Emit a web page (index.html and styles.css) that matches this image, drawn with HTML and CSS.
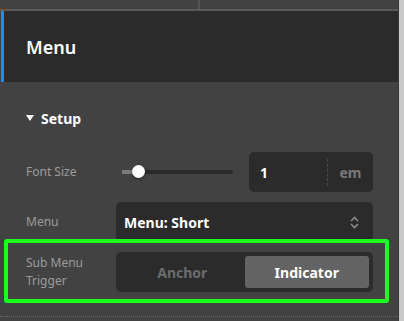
FILE: index.html
```html
<!DOCTYPE html>
<html lang="en">
<head>
    <meta charset="UTF-8">
    <meta name="viewport" content="width=device-width, initial-scale=1.0">
    <title>Menu Settings</title>
    <link rel="stylesheet" href="styles.css">
</head>
<body>
    <div class="layout">
        <div class="panel">
            <div class="topbar">
                <div class="tab"></div>
                <div class="tab"></div>
            </div>
            <div class="panel-header">Menu</div>
            <div class="section">
                <div class="section-title">
                    <span class="caret"></span>
                    Setup
                </div>

                <div class="field">
                    <label class="field-label">Font Size</label>
                    <div class="field-control">
                        <div class="slider">
                            <div class="slider-track">
                                <div class="slider-fill"></div>
                                <div class="slider-thumb"></div>
                            </div>
                        </div>
                        <div class="number-input">
                            <span class="number-value">1</span>
                            <span class="number-unit">em</span>
                        </div>
                    </div>
                </div>

                <div class="field">
                    <label class="field-label">Menu</label>
                    <div class="select">
                        <span>Menu: Short</span>
                        <svg class="select-arrows" width="9" height="13" viewBox="0 0 9 13">
                            <path d="M1 5 L4.5 1.5 L8 5 M1 8 L4.5 11.5 L8 8" fill="none" stroke="#8a8a8a" stroke-width="1.6"/>
                        </svg>
                    </div>
                </div>

                <div class="field highlighted">
                    <span class="highlight"></span>
                    <label class="field-label">Sub Menu Trigger</label>
                    <div class="segmented">
                        <button class="segment">Anchor</button>
                        <button class="segment active">Indicator</button>
                    </div>
                </div>
            </div>
        </div>
        <div class="scrollbar"></div>
    </div>
</body>
</html>
```

FILE: styles.css
```css
body {
    margin: 0;
    width: 404px;
    height: 321px;
    overflow: hidden;
    background-color: #424242;
    font-family: "Noto Sans", "Open Sans", sans-serif;
    color: #fff;
}
.layout {
    display: flex;
    height: 321px;
}
.panel {
    width: 398px;
    background-color: #424242;
}
.scrollbar {
    width: 5px;
    border-left: 1px solid #363636;
    background-color: #c9c9c9;
}
.topbar {
    display: flex;
    height: 9px;
    border-bottom: 2px solid #5a5a5a;
}
.tab {
    width: 198px;
    background-color: #424242;
}
.tab + .tab {
    flex: 1;
    border-left: 2px solid #555;
}
.panel-header {
    display: flex;
    align-items: center;
    height: 71px;
    margin-left: 1px;
    padding-left: 22px;
    border-left: 3px solid #1b8cf0;
    background-color: #2b2b2b;
    font-size: 18px;
    font-weight: 600;
}
.section {
    padding: 28px 25px 24px 26px;
    border-bottom: 1px dotted #6a6a6a;
}
.section-title {
    display: flex;
    align-items: center;
    gap: 7px;
    height: 16px;
    margin-bottom: 26px;
    font-size: 14px;
    font-weight: 700;
}
.caret {
    width: 0;
    height: 0;
    border-left: 4px solid transparent;
    border-right: 4px solid transparent;
    border-top: 6px solid #fff;
}
.field {
    display: grid;
    grid-template-columns: 90px 1fr;
    align-items: center;
    height: 40px;
    margin-bottom: 10px;
}
.field:last-child {
    margin-bottom: 0;
}
.field-label {
    padding-right: 12px;
    font-size: 12px;
    line-height: 18px;
    color: #9c9c9c;
}
.field-control {
    display: flex;
    align-items: center;
    gap: 16px;
    height: 40px;
}
.slider {
    flex: 1;
    padding: 0 0 0 6px;
}
.slider-track {
    position: relative;
    height: 4px;
    border-radius: 2px;
    background-color: #2b2b2b;
}
.slider-fill {
    width: 16px;
    height: 4px;
    background-color: #7a7a7a;
}
.slider-thumb {
    position: absolute;
    left: 10px;
    top: -5px;
    width: 13px;
    height: 13px;
    border-radius: 50%;
    background-color: #fff;
    box-shadow: 0 1px 3px rgba(0,0,0,0.5);
}
.number-input {
    display: flex;
    align-items: center;
    width: 124px;
    height: 40px;
    border-radius: 5px;
    background-color: #2b2b2b;
}
.number-value {
    flex: 1;
    padding-left: 11px;
    font-size: 14px;
    font-weight: 700;
}
.number-unit {
    width: 45px;
    height: 27px;
    line-height: 27px;
    border-left: 1px dashed #4a4a4a;
    text-align: center;
    font-size: 14px;
    font-weight: 700;
    color: #787878;
}
.select {
    display: flex;
    align-items: center;
    justify-content: space-between;
    height: 40px;
    padding: 0 14px 0 8px;
    border-radius: 5px;
    background-color: #2b2b2b;
    font-size: 14px;
    font-weight: 700;
}
.highlighted {
    position: relative;
}
.highlight {
    position: absolute;
    left: -22px;
    top: -13px;
    width: 377px;
    height: 56px;
    border: 4px solid #19ff19;
    border-radius: 3px;
}
.segmented {
    display: flex;
    height: 40px;
    padding: 4px;
    box-sizing: border-box;
    border-radius: 5px;
    background-color: #2b2b2b;
}
.segment {
    flex: 1;
    border: none;
    border-radius: 3px;
    background: none;
    font-family: inherit;
    font-size: 14px;
    font-weight: 700;
    color: #6c6c6c;
}
.segment.active {
    background-color: #636363;
    color: #fff;
}
```
